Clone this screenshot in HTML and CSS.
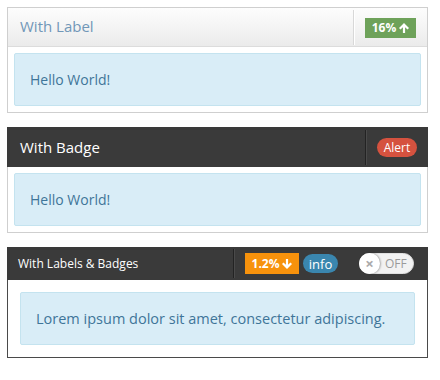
FILE: index.html
```html
<!DOCTYPE html>
<html lang="en">
<head>
  <meta charset="UTF-8">
  <title>Panels</title>
  <link rel="stylesheet" href="styles.css">
</head>
<body>

  <!-- panel with a label -->
  <div class="panel panel-light">
    <div class="panel-head">
      <div class="panel-title">With Label</div>
      <div class="panel-tools">
        <span class="label label-green">16%
          <svg class="arrow" viewBox="0 0 10 10"><path d="M5 0 L10 5 L8.5 6.5 L6.1 4.2 V10 H3.9 V4.2 L1.5 6.5 L0 5 Z"/></svg>
        </span>
      </div>
    </div>
    <div class="panel-body">
      <div class="alert">Hello World!</div>
    </div>
  </div>

  <!-- panel with a badge -->
  <div class="panel panel-dark">
    <div class="panel-head">
      <div class="panel-title">With Badge</div>
      <div class="panel-tools">
        <span class="badge badge-red">Alert</span>
      </div>
    </div>
    <div class="panel-body">
      <div class="alert">Hello World!</div>
    </div>
  </div>

  <!-- panel with labels, badges and a switch -->
  <div class="panel panel-dark panel-small">
    <div class="panel-head">
      <div class="panel-title">With Labels &amp; Badges</div>
      <div class="panel-tools">
        <span class="label label-orange">1.2%
          <svg class="arrow" viewBox="0 0 10 10"><path d="M5 10 L10 5 L8.5 3.5 L6.1 5.8 V0 H3.9 V5.8 L1.5 3.5 L0 5 Z"/></svg>
        </span>
        <span class="badge badge-blue">info</span>
        <span class="switch">
          <span class="knob">&times;</span>
          <span class="switch-text">OFF</span>
        </span>
      </div>
    </div>
    <div class="panel-body">
      <div class="alert">Lorem ipsum dolor sit amet, consectetur adipiscing.</div>
    </div>
  </div>

</body>
</html>
```

FILE: styles.css
```css
/* page */
body {
  margin: 0;
  padding: 7px;
  background: #fff;
  font-family: "Open Sans", "Liberation Sans", sans-serif;
}

/* panel box */
.panel {
  width: 419px;
  border: 1px solid #cfcfcf;
  margin-bottom: 14px;
}

.panel-head {
  display: flex;
  align-items: stretch;
  height: 38px;
}

.panel-title {
  flex: 1;
  display: flex;
  align-items: center;
  padding-left: 12px;
  padding-bottom: 2px;
  font-size: 15px;
}

.panel-tools {
  display: flex;
  align-items: center;
  gap: 4px;
  padding: 0 11px;
  margin: 2px 0 1px;
}

.panel-body {
  padding: 6px;
}

/* light header */
.panel-light .panel-head {
  background: linear-gradient(#fdfdfd, #ebebeb);
  border-bottom: 1px solid #dcdcdc;
}

.panel-light .panel-title {
  color: #7197b8;
}

.panel-light .panel-tools {
  border-left: 1px solid #d8d8d8;
  box-shadow: inset 1px 0 0 #fff;
}

/* dark header */
.panel-dark {
  border-top: none;
}

.panel-dark .panel-head {
  background: #3a3a3a;
  margin: 0 -1px;
  height: 40px;
}

.panel-dark .panel-title {
  color: #fff;
  padding-left: 13px;
  padding-bottom: 0;
}

.panel-dark .panel-tools {
  border-left: 1px solid #232323;
  box-shadow: inset 1px 0 0 #4a4a4a;
  margin: 3px 0 2px;
}

/* small dark header */
.panel-small {
  border-color: #4a4a4a;
}

.panel-small .panel-head {
  height: 33px;
}

.panel-small .panel-title {
  font-size: 12px;
  padding-left: 11px;
}

.panel-small .panel-tools {
  padding-right: 14px;
  margin: 2px 0 2px;
}

.panel-small .panel-body {
  padding: 12px;
}

.panel-small .alert {
  padding-left: 15px;
  font-size: 14.5px;
}

/* info alert */
.alert {
  background: #d9edf7;
  border: 1px solid #c4e3ef;
  border-radius: 2px;
  color: #3f7599;
  font-size: 14px;
  height: 51px;
  display: flex;
  align-items: center;
  padding-left: 15px;
}

/* labels and badges */
.label {
  display: inline-flex;
  align-items: center;
  justify-content: center;
  gap: 3px;
  color: #fff;
  font-size: 12px;
  font-weight: bold;
  height: 20px;
}

.label-green {
  width: 51px;
  background: #6ea25a;
}

.label-orange {
  width: 54px;
  height: 21px;
  background: #f7920c;
}

.arrow {
  width: 10px;
  height: 10px;
  fill: #fff;
}

.badge {
  display: inline-flex;
  align-items: center;
  justify-content: center;
  color: #fff;
  font-size: 12px;
  height: 19px;
  border-radius: 10px;
}

.badge-red {
  width: 40px;
  background: #d5523f;
}

.badge-blue {
  width: 35px;
  background: #3a86ae;
  font-size: 13px;
}

/* on/off switch */
.switch {
  display: inline-flex;
  align-items: center;
  width: 55px;
  height: 21px;
  margin-left: 17px;
  background: #f2f2f2;
  border-radius: 11px;
  box-sizing: border-box;
  border: 1px solid #e0e0e0;
}

.knob {
  width: 21px;
  height: 21px;
  margin-left: -1px;
  border-radius: 50%;
  background: #fff;
  box-shadow: 1px 0 2px rgba(0, 0, 0, 0.3);
  color: #aaa;
  font-size: 15px;
  font-weight: bold;
  line-height: 20px;
  text-align: center;
}

.switch-text {
  color: #9a9a9a;
  font-size: 12px;
  margin-left: 5px;
}
```
